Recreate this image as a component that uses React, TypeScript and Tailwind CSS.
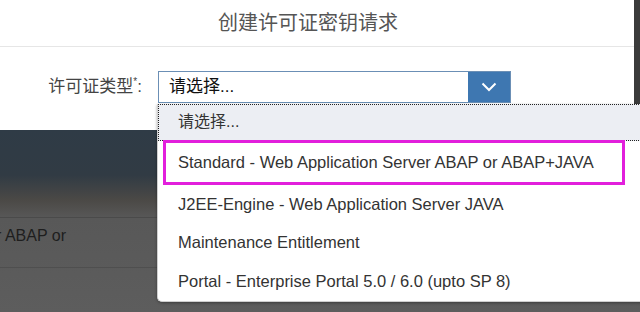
const OPCIONES = [
  'Standard - Web Application Server ABAP or ABAP+JAVA',
  'J2EE-Engine - Web Application Server JAVA',
  'Maintenance Entitlement',
  'Portal - Enterprise Portal 5.0 / 6.0 (upto SP 8)',
]

const fuente = { fontFamily: '"Liberation Sans", "Noto Sans CJK SC", sans-serif' }

export default function App() {
  return (
    <div className="relative w-[640px] h-[312px] overflow-hidden bg-[#5c5c5c]" style={fuente}>
      {/* dialogo */}
      <div className="flex h-[130px]">
        <div className="w-[634px] bg-white flex flex-col">
          <div className="h-[47px] border-b border-[#e6e6e6] flex items-center justify-center pr-[18px]">
            <span className="text-[20px] text-[#555]">创建许可证密钥请求</span>
          </div>
          <div className="flex items-center pt-[24px]">
            <span className="w-[143px] text-right pr-[1px] text-[17px] text-[#444]">
              许可证类型<span className="text-[10px] align-top">*</span>:
            </span>
            <div className="ml-[15px] w-[353px] h-[32px] flex border border-[#6b8fb5]">
              <div className="flex-1 flex items-center pl-[10px] text-[17px] text-[#111]">请选择...</div>
              <div className="w-[42px] bg-[#3e77b1] flex items-center justify-center">
                <svg width="16" height="10" viewBox="0 0 16 10">
                  <path d="M1.5 1.5 L8 8 L14.5 1.5" fill="none" stroke="white" strokeWidth="2" />
                </svg>
              </div>
            </div>
          </div>
        </div>
        <div className="flex-1 bg-[#3b3b3b]" />
      </div>

      {/* fondo oscuro */}
      <div className="h-[182px] bg-[linear-gradient(to_bottom,#2f3b46_0px,#313b44_45px,#4b4946_70px,#585858_88px,#5d5d5d_182px)] flex flex-col">
        <div className="h-[88px] border-b border-[#4a4a4a]" />
        <div className="h-[50px] border-b border-[#4f4f4f] pt-[6px]">
          <span className="block ml-[-4px] text-[16px] text-[#1e1e1e]">r ABAP or</span>
        </div>
      </div>

      {/* lista desplegable */}
      <div className="absolute left-[157px] top-[104px] w-[500px] h-[198px] bg-white rounded-bl-[5px] border-l border-b border-[#cfcfcf] shadow-[0_1px_3px_rgba(0,0,0,0.35)] flex flex-col">
        <div className="h-[38px] bg-[#eceef3] border border-dotted border-[#222] flex items-center pl-[19px] text-[16px] text-[#333]">
          请选择...
        </div>
        {OPCIONES.map((o, i) => (
          <div
            key={o}
            className={`h-[40px] flex items-center text-[16.5px] text-[#333] ${
              i === 0 ? 'ml-[5px] w-[462px] border-[3px] border-[#e21fdc] pl-[12px] h-[46px] -mt-[1px]' : 'pl-[20px]'
            }`}
          >
            {o}
          </div>
        ))}
      </div>
    </div>
  )
}
